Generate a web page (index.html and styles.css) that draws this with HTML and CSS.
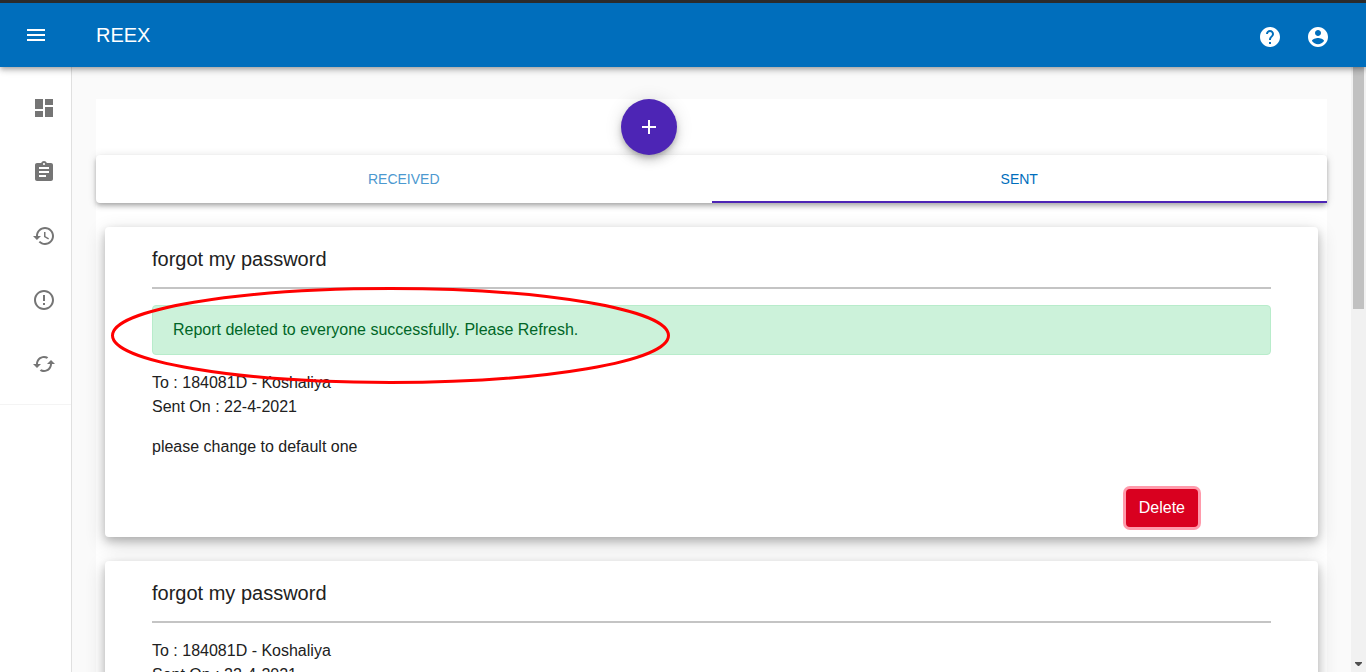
FILE: index.html
```html
<!DOCTYPE html>
<html lang="en">
<head>
<meta charset="utf-8">
<meta name="viewport" content="width=device-width, initial-scale=1">
<title>REEX</title>
<link rel="stylesheet" href="styles.css">
</head>
<body class="page">
<header class="app-bar">
  <button class="icon-button" type="button" aria-label="Open menu">
    <svg class="icon" viewBox="0 0 24 24"><path d="M3 18h18v-2H3v2zm0-5h18v-2H3v2zm0-7v2h18V6H3z"/></svg>
  </button>
  <h1 class="brand">REEX</h1>
  <div class="app-actions">
    <button class="icon-button" type="button" aria-label="Help">
      <svg class="icon" viewBox="0 0 24 24"><path d="M12 2C6.48 2 2 6.48 2 12s4.48 10 10 10 10-4.48 10-10S17.52 2 12 2zm1 17h-2v-2h2v2zm2.07-7.75l-.9.92C13.45 12.9 13 13.5 13 15h-2v-.5c0-1.1.45-2.1 1.17-2.83l1.24-1.26c.37-.36.59-.86.59-1.41 0-1.1-.9-2-2-2s-2 .9-2 2H8c0-2.21 1.79-4 4-4s4 1.79 4 4c0 .88-.36 1.68-.93 2.25z"/></svg>
    </button>
    <button class="icon-button" type="button" aria-label="Account">
      <svg class="icon" viewBox="0 0 24 24"><path d="M12 2C6.48 2 2 6.48 2 12s4.48 10 10 10 10-4.48 10-10S17.52 2 12 2zm0 3c1.66 0 3 1.34 3 3s-1.34 3-3 3-3-1.34-3-3 1.34-3 3-3zm0 14.2c-2.5 0-4.71-1.28-6-3.22.03-1.99 4-3.08 6-3.08 1.99 0 5.97 1.09 6 3.08-1.29 1.94-3.5 3.22-6 3.22z"/></svg>
    </button>
  </div>
</header>
<div class="body">
  <nav class="sidebar" aria-label="Main">
    <div class="nav-list">
      <a class="nav-item" href="#dashboard" aria-label="Dashboard"><svg class="icon" viewBox="0 0 24 24"><path d="M3 13h8V3H3v10zm0 8h8v-6H3v6zm10 0h8V11h-8v10zm0-18v6h8V3h-8z"/></svg></a>
      <a class="nav-item" href="#reports" aria-label="Reports"><svg class="icon" viewBox="0 0 24 24"><path d="M19 3h-4.180C14.400 1.840 13.300 1 12 1c-1.300 0-2.400.840-2.820 2H5c-1.100 0-2 .900-2 2v14c0 1.100.900 2 2 2h14c1.100 0 2-.900 2-2V5c0-1.100-.900-2-2-2zm-7 0c.550 0 1 .450 1 1s-.450 1-1 1-1-.450-1-1 .450-1 1-1zm2 14H7v-2h7v2zm3-4H7v-2h10v2zm0-4H7V7h10v2z"/></svg></a>
      <a class="nav-item" href="#history" aria-label="History"><svg class="icon" viewBox="0 0 24 24"><path d="M13 3c-4.970 0-9 4.030-9 9H1l3.890 3.890.07.140L9 12H6c0-3.870 3.130-7 7-7s7 3.130 7 7-3.130 7-7 7c-1.930 0-3.680-.790-4.940-2.060l-1.420 1.420C8.270 19.990 10.510 21 13 21c4.970 0 9-4.030 9-9s-4.030-9-9-9zm-1 5v5l4.280 2.540.72-1.210-3.500-2.080V8H12z"/></svg></a>
      <a class="nav-item" href="#alerts" aria-label="Alerts"><svg class="icon" viewBox="0 0 24 24"><path d="M11 15h2v2h-2zm0-8h2v6h-2zm.99-5C6.470 2 2 6.480 2 12s4.470 10 9.990 10C17.520 22 22 17.520 22 12S17.520 2 11.990 2zM12 20c-4.420 0-8-3.580-8-8s3.580-8 8-8 8 3.580 8 8-3.580 8-8 8z"/></svg></a>
      <a class="nav-item" href="#refresh" aria-label="Refresh"><svg class="icon" viewBox="0 0 24 24"><path d="M19 8l-4 4h3c0 3.310-2.690 6-6 6-1.010 0-1.970-.250-2.800-.700l-1.460 1.460C8.970 19.540 10.430 20 12 20c4.420 0 8-3.580 8-8h3l-4-4zM6 12c0-3.310 2.690-6 6-6 1.010 0 1.970.250 2.800.700l1.460-1.460C15.030 4.460 13.570 4 12 4c-4.420 0-8 3.580-8 8H1l4 4 4-4H6z"/></svg></a>
    </div>
  </nav>
  <main class="content">
    <div class="panel">
      <div class="fab-row">
        <button class="fab" type="button" aria-label="New report"><svg class="icon" viewBox="0 0 24 24"><path d="M19 13h-6v6h-2v-6H5v-2h6V5h2v6h6v2z"/></svg></button>
      </div>
      <div class="tabs" role="tablist">
        <button class="tab" type="button" role="tab" aria-selected="false">RECEIVED</button>
        <button class="tab tab-active" type="button" role="tab" aria-selected="true">SENT</button>
      </div>
      <div class="reports">
        <article class="card">
          <h2 class="card-title">forgot my password</h2>
          <div class="alert" role="status">Report deleted to everyone successfully. Please Refresh.</div>
          <p class="meta">To : 184081D - Koshaliya<br>Sent On : 22-4-2021</p>
          <p class="message">please change to default one</p>
          <div class="card-actions"><button class="delete delete-focused" type="button">Delete</button></div>
          <svg class="highlight" viewBox="0 0 559 97" aria-hidden="true"><ellipse cx="279.5" cy="48.500" rx="278" ry="47"/></svg>
        </article>
        <article class="card">
          <h2 class="card-title">forgot my password</h2>
          <p class="meta">To : 184081D - Koshaliya<br>Sent On : 22-4-2021</p>
        </article>
      </div>
    </div>
  </main>
  <div class="scrollbar" aria-hidden="true">
    <div class="scroll-thumb"></div>
    <svg class="scroll-arrow" viewBox="0 0 7 4"><path d="M0 0h7v1L4 4H3L0 1z"/></svg>
  </div>
</div>
</body>
</html>
```
FILE: styles.css
```css
* { box-sizing: border-box; }

.page {
  margin: 0;
  height: 100vh;
  overflow: hidden;
  display: flex;
  flex-direction: column;
  background: #fafafa;
  color: #212121;
  font-family: "Liberation Sans", Arial, sans-serif;
  font-size: 16px;
  line-height: 24px;
}

button {
  font-family: inherit;
  border: 0;
  cursor: pointer;
}

.icon {
  display: block;
  width: 24px;
  height: 24px;
  fill: currentColor;
}

.app-bar {
  position: relative;
  z-index: 2;
  flex: none;
  display: flex;
  align-items: center;
  padding: 0 24px 0 12px;
  border-top: 3px solid #2b2b2b;
  background: #006ebc;
  color: #fff;
  box-shadow: 0 2px 4px -1px rgba(0, 0, 0, .2), 0 4px 5px rgba(0, 0, 0, .14), 0 1px 10px rgba(0, 0, 0, .12);
}

.icon-button {
  padding: 12px;
  background: none;
  color: inherit;
}

.brand {
  margin: 0 0 0 36px;
  font-size: 20px;
  font-weight: 400;
  line-height: 64px;
}

.app-actions {
  display: flex;
  margin-left: auto;
  padding-top: 4px;
}

.body {
  flex: 1;
  min-height: 0;
  display: flex;
}

.sidebar {
  flex: none;
  width: 72px;
  background: #fff;
  border-right: 1px solid #e0e0e0;
}

.nav-list {
  padding: 9px 0 8px;
  border-bottom: 1px solid #f4f4f4;
}

.nav-item {
  display: block;
  padding: 20px 0 20px 32px;
  color: #757575;
}

.content {
  flex: 1;
  min-width: 0;
  overflow: hidden;
  padding: 32px 24px;
}

.panel { background: #fff; }

.fab-row {
  display: grid;
  grid-template-columns: repeat(12, 1fr);
}

.fab {
  position: relative;
  z-index: 1;
  grid-column: 6;
  margin-left: 12px;
  width: 56px;
  height: 56px;
  padding: 16px;
  border-radius: 50%;
  background: #4d25b5;
  color: #fff;
  box-shadow: 0 3px 5px -1px rgba(0, 0, 0, .2), 0 6px 10px rgba(0, 0, 0, .14), 0 1px 18px rgba(0, 0, 0, .12);
}

.tabs {
  display: flex;
  background: #fff;
  border-radius: 4px;
  box-shadow: 0 2px 4px -1px rgba(0, 0, 0, .2), 0 4px 5px rgba(0, 0, 0, .14), 0 1px 10px rgba(0, 0, 0, .12);
}

.tab {
  flex: 1;
  padding: 12px 12px 10px;
  border-bottom: 2px solid transparent;
  background: none;
  color: #4c99d0;
  font-size: 14px;
  line-height: 24px;
}

.tab-active {
  color: #006ebc;
  border-bottom-color: #4d25b5;
}

.reports {
  display: flex;
  flex-direction: column;
  gap: 24px;
  padding: 24px 9px;
}

.card {
  position: relative;
  padding: 16px 47px 10px;
  background: #fff;
  border-radius: 4px;
  box-shadow: 0 4px 8px rgba(0, 0, 0, .2), 0 6px 20px rgba(0, 0, 0, .19);
}

.card-title {
  margin: 0 0 16px;
  padding-bottom: 12px;
  border-bottom: 2px solid #c4c4c4;
  font-size: 20px;
  font-weight: 400;
  line-height: 32px;
}

.alert {
  margin-bottom: 16px;
  padding: 12px 20px;
  border: 1px solid #b8eccb;
  border-radius: 4px;
  background: #ccf2da;
  color: #006627;
}

.meta { margin: 0 0 16px; }

.message { margin: 0 0 30px; }

.card-actions {
  display: flex;
  justify-content: flex-end;
  padding-right: 73px;
}

.delete {
  padding: 7px 13px;
  border-radius: 4px;
  background: #d9001f;
  color: #fff;
  font-size: 16px;
  line-height: 24px;
}

.delete-focused { box-shadow: 0 0 0 3px #ff9aab; }

/* Hand-marked ring around the confirmation message */
.highlight {
  position: absolute;
  left: 6px;
  top: 60px;
  width: 559px;
  height: 97px;
  fill: none;
  stroke: #f00;
  stroke-width: 3px;
  pointer-events: none;
}

.scrollbar {
  flex: none;
  width: 15px;
  display: flex;
  flex-direction: column;
  justify-content: space-between;
  padding: 0 2px 6px;
  background: #f1f1f1;
}

.scroll-thumb {
  height: 40%;
  min-height: 242px;
  width: 11px;
  background: #c1c1c1;
}

.scroll-arrow {
  display: block;
  width: 7px;
  height: 4px;
  margin-left: 2px;
  fill: #505050;
}
```
